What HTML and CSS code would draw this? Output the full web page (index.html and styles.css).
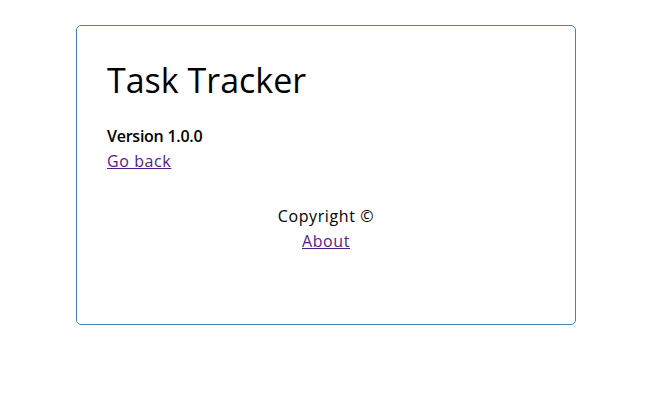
FILE: index.html
```html
<!DOCTYPE html>
<html lang="en">
<head>
<meta charset="utf-8">
<title>Task Tracker</title>
<link rel="stylesheet" href="styles.css">
</head>
<body>
<div class="container">
  <header class="header">
    <h1>Task Tracker</h1>
  </header>
  <div class="about">
    <h4>Version 1.0.0</h4>
    <a href="#" class="visited">Go back</a>
  </div>
  <footer class="footer">
    <p>Copyright &copy;</p>
    <a href="#" class="visited">About</a>
  </footer>
</div>
</body>
</html>
```
FILE: styles.css
```css
* {
  box-sizing: border-box;
  margin: 0;
  padding: 0;
}

body {
  font-family: "Open Sans", "Liberation Sans", sans-serif;
  font-size: 16px;
  letter-spacing: 0.6px;
  color: #000;
  background: #fff;
  padding-right: 3px;
}

.container {
  max-width: 500px;
  min-height: 300px;
  margin: 25px auto;
  border: 1px solid steelblue;
  border-radius: 5px;
  padding: 30px;
}

.header {
  display: flex;
  justify-content: space-between;
  align-items: center;
  margin-bottom: 20px;
}

.header h1 {
  font-size: 34px;
  font-weight: 500;
  letter-spacing: 0;
  line-height: 48px;
}

.about h4 {
  font-size: 16px;
  font-weight: 600;
  letter-spacing: -0.25px;
  line-height: 25px;
}

.about a,
.footer a {
  display: inline-block;
  line-height: 25px;
}

.visited {
  color: #551a8b;
}

.footer {
  margin-top: 30px;
  text-align: center;
  line-height: 25px;
}
```
